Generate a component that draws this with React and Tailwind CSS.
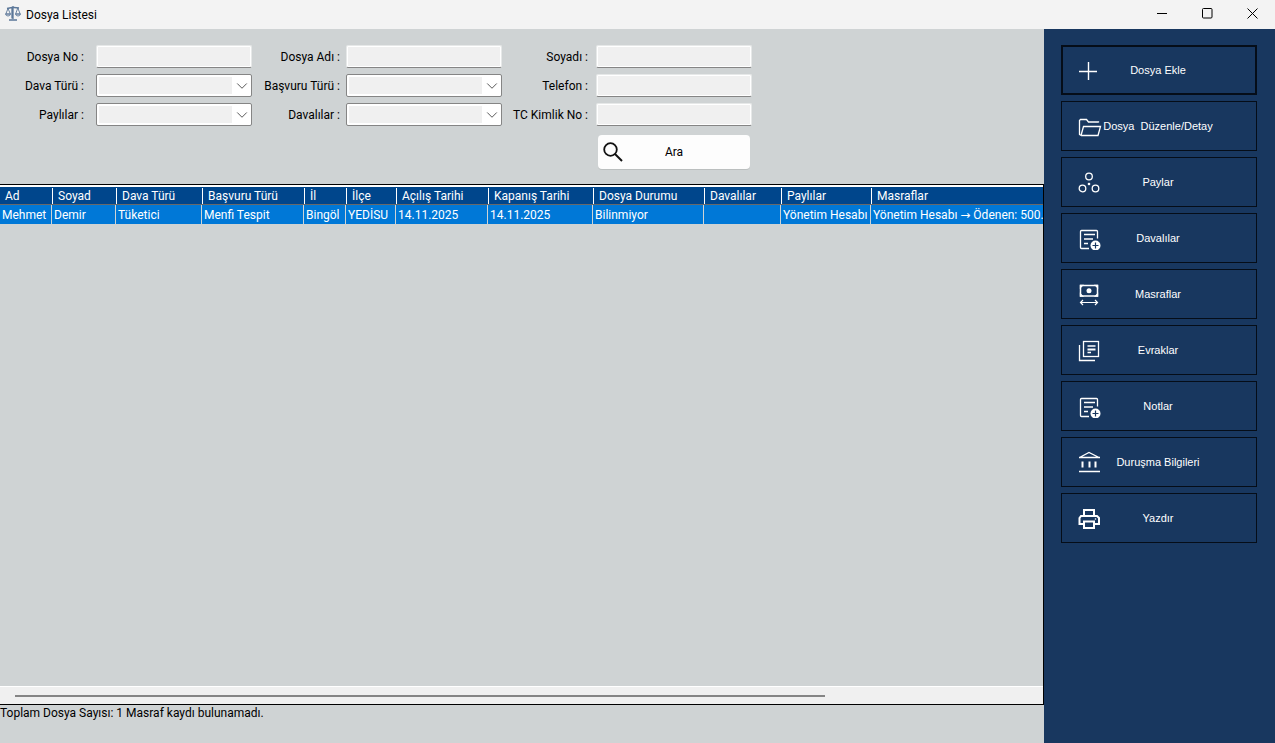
import React, { useState } from "react";
import { ChevronDown } from "lucide-react";

// Sidebar icons, all drawn on a 24x24 grid
const PlusIcon = () => (
  <path d="M1 13.5h18M10.5 4v18" strokeWidth="1.4" />
);

const FolderIcon = () => (
  <path d="M3 21.5 1.5 20.5V6.5L2.5 5.5h6l2 2.500h10v.5M3 21.500 5.500 12.500h17L20 21.500H3" strokeWidth="1.300" />
);

const SharesIcon = () => (
  <>
    <circle cx="11" cy="6.500" r="3.300" />
    <circle cx="4.500" cy="18.500" r="3.300" />
    <circle cx="17.500" cy="18.500" r="3.300" />
    <circle cx="11" cy="14" r="1.300" fill="currentColor" stroke="none" />
  </>
);

const NoteAddIcon = () => (
  <>
    <path d="M19.500 12.500V5.500Q19.500 4.500 18.500 4.500H3.500Q2.500 4.500 2.500 5.500V21.500Q2.500 22.500 3.500 22.500H11" />
    <path d="M6 8.500h11M6 13h9M6 17.500h4" />
    <circle cx="17.500" cy="19.500" r="5" fill="currentColor" stroke="none" />
    <path d="M17.500 16.500v6M14.500 19.500h6" stroke="#18375f" strokeWidth="1.200" />
  </>
);

const MoneyIcon = () => (
  <>
    <rect x="2.500" y="3.500" width="17" height="10.500" strokeWidth="1.500" />
    <path d="M2.500 3.500h2l-2 2zM19.500 3.500h-2l2 2zM2.500 14h2l-2-2zM19.500 14h-2l2-2z" fill="currentColor" />
    <circle cx="11" cy="8.700" r="2.500" fill="currentColor" stroke="none" />
    <path d="M2.500 20.500h17M5 18l-2.500 2.500L5 23M17 18l2.500 2.500L17 23" strokeWidth="1.200" />
  </>
);

const DocumentsIcon = () => (
  <>
    <rect x="5.500" y="3.500" width="15" height="15" />
    <path d="M1.500 7v15.500H17M9.500 8h8M9.500 14.500h3.500" />
    <path d="M9.500 11.500h8" strokeWidth="2" />
  </>
);

const CourtIcon = () => (
  <>
    <path d="M1 7.500h21M1.500 7.500 11 2.500l10 5M1 21.500h21" />
    <path d="M4.500 11.500v6M11.500 11.500v6M17.500 11.500v6" strokeWidth="2" />
  </>
);

const PrinterIcon = () => (
  <>
    <path d="M6 10V4h10v6M6 18H1.500v-6L3 10h16l2 2v6H16" strokeWidth="2" />
    <path d="M6 15.500h10V22H6z" strokeWidth="2" />
    <circle cx="17.500" cy="13" r="0.800" fill="currentColor" stroke="none" />
  </>
);

const ScalesIcon = () => (
  <svg viewBox="0 0 16 16" className="mb-1 h-4 w-4 text-[#5b7799]" fill="none" stroke="currentColor" aria-hidden="true">
    <path d="M8 1v13M7 2.500v11M4 15h8M2 3.500 7 2.500h2L14 3" strokeWidth="1.300" />
    <path d="M3 3.500.8 9h4.600zM12.800 3l-2.200 6h4.600z" strokeWidth="0.900" />
    <path d="M.500 9h5q-.5 2-2.500 2T.500 9zM10.500 9h5q-.5 2-2.500 2t-2.500-2z" strokeWidth="0.900" />
  </svg>
);

const menuItems = [
  { label: "Dosya Ekle", icon: PlusIcon },
  { label: "Dosya  Düzenle/Detay", icon: FolderIcon },
  { label: "Paylar", icon: SharesIcon },
  { label: "Davalılar", icon: NoteAddIcon },
  { label: "Masraflar", icon: MoneyIcon },
  { label: "Evraklar", icon: DocumentsIcon },
  { label: "Notlar", icon: NoteAddIcon },
  { label: "Duruşma Bilgileri", icon: CourtIcon },
  { label: "Yazdır", icon: PrinterIcon },
];

const columns = [
  { title: "Ad", width: "w-[52px]" },
  { title: "Soyad", width: "w-[64px]" },
  { title: "Dava Türü", width: "w-[86px]" },
  { title: "Başvuru Türü", width: "w-[102px]" },
  { title: "İl", width: "w-[42px]" },
  { title: "İlçe", width: "w-[50px]" },
  { title: "Açılış Tarihi", width: "w-[92px]" },
  { title: "Kapanış Tarihi", width: "w-[105px]" },
  { title: "Dosya Durumu", width: "w-[111px]" },
  { title: "Davalılar", width: "w-[77px]" },
  { title: "Paylılar", width: "w-[90px]" },
  { title: "Masraflar", width: "w-auto" },
];

const rows = [
  [
    "Mehmet",
    "Demir",
    "Tüketici",
    "Menfi Tespit",
    "Bingöl",
    "YEDİSU",
    "14.11.2025",
    "14.11.2025",
    "Bilinmiyor",
    "",
    "Yönetim Hesabı",
    "Yönetim Hesabı → Ödenen: 500.",
  ],
];

const TextField = ({ id, label }) => (
  <>
    <label htmlFor={id} className="text-right whitespace-nowrap">
      {label} :
    </label>
    <input
      id={id}
      type="text"
      className="h-[23px] w-full rounded-[2px] border border-[#e6e8e8] border-b-[#858585] bg-[#f0f0f0] px-1 shadow-[inset_0_0_0_1px_#fff] focus:outline-none"
    />
  </>
);

const SelectField = ({ id, label }) => (
  <>
    <label htmlFor={id} className="text-right whitespace-nowrap">
      {label} :
    </label>
    <div className="relative h-[23px] rounded-[2px] border border-[#858585] bg-white">
      <select
        id={id}
        className="block h-full w-full appearance-none bg-[#f0f0f0] bg-clip-content py-0.5 pr-[19px] pl-0.5 focus:outline-none"
      >
        <option value=""></option>
      </select>
      <ChevronDown
        className="pointer-events-none absolute top-0.5 right-0 h-[18px] w-[18px] text-[#555555]"
        strokeWidth={1.3}
      />
    </div>
  </>
);

const TitleBar = () => (
  <header className="flex h-[29px] items-center bg-[#f3f3f3] pl-[5px]">
    <ScalesIcon />
    <h1 className="flex-1 pl-[5px] text-[12px]">Dosya Listesi</h1>
    <button type="button" aria-label="Simge durumuna küçült" className="flex h-full w-[45px] items-center justify-center pb-0.5">
      <svg width="11" height="11" viewBox="0 0 11 11" stroke="#000" fill="none">
        <path d="M0 5.500h10" />
      </svg>
    </button>
    <button type="button" aria-label="Ekranı kapla" className="flex h-full w-[45px] items-center justify-center pb-0.5">
      <svg width="11" height="11" viewBox="0 0 11 11" stroke="#000" fill="none">
        <rect x="0.500" y="0.500" width="9.500" height="9.500" rx="1" />
      </svg>
    </button>
    <button type="button" aria-label="Kapat" className="flex h-full w-[45px] items-center justify-center pb-0.5">
      <svg width="11" height="11" viewBox="0 0 11 11" stroke="#000" fill="none">
        <path d="m.500.500 10 10m0-10-10 10" />
      </svg>
    </button>
  </header>
);

// Search criteria above the list
const FilterForm = () => (
  <form className="flex items-start pt-4 pb-[15px]" onSubmit={(e) => e.preventDefault()}>
    <div className="grid grid-cols-[84px_156px] items-center gap-x-3 gap-y-1.5">
      <TextField id="dosya-no" label="Dosya No" />
      <SelectField id="dava-turu" label="Dava Türü" />
      <SelectField id="paylilar" label="Paylılar" />
    </div>
    <div className="grid grid-cols-[88px_156px] items-center gap-x-1.5 gap-y-1.5">
      <TextField id="dosya-adi" label="Dosya Adı" />
      <SelectField id="basvuru-turu" label="Başvuru Türü" />
      <SelectField id="davalilar" label="Davalılar" />
    </div>
    <div className="grid grid-cols-[86px_156px] items-center gap-x-2 gap-y-1.5">
      <TextField id="soyadi" label="Soyadı" />
      <TextField id="telefon" label="Telefon" />
      <TextField id="tc-kimlik" label="TC Kimlik No" />
      <button
        type="submit"
        className="col-start-2 mx-0.5 mt-[3px] grid h-[34px] grid-cols-[20px_1fr_20px] items-center rounded-[4px] bg-[#fdfdfd] px-[5px] shadow-[0_1px_0_#bbbfbf]"
      >
        <svg viewBox="0 0 20 20" className="h-5 w-5" fill="none" stroke="#111" aria-hidden="true">
          <circle cx="7.500" cy="7.500" r="6.300" strokeWidth="1.800" />
          <path d="m12 12 7 7" strokeWidth="2" />
        </svg>
        <span>Ara</span>
      </button>
    </div>
  </form>
);

const CaseTable = () => (
  <div className="flex flex-1 flex-col border-t border-r border-b border-black">
    <div className="flex-1 overflow-hidden border-t-2 border-white">
      <table className="w-full table-fixed border-separate border-spacing-0 text-white">
        <thead>
          <tr className="bg-[#00468c]">
            {columns.map((col, i) => (
              <th
                key={col.title}
                className={`${col.width} h-[18px] border-b border-[#696969] p-0 text-left font-normal whitespace-nowrap`}
              >
                <span className={i === 0 ? "block pl-[5px] leading-4" : "block border-l border-white pl-[5px] leading-4"}>
                  {col.title}
                </span>
              </th>
            ))}
          </tr>
        </thead>
        <tbody>
          {rows.map((row, r) => (
            <tr key={r} className="bg-[#0078d7]">
              {row.map((cell, i) => (
                <td
                  key={i}
                  className="h-[19px] overflow-hidden border-r border-[#cfd3d4] p-0 pl-0.5 leading-[18px] whitespace-nowrap last:border-r-0"
                >
                  {cell}
                </td>
              ))}
            </tr>
          ))}
        </tbody>
      </table>
    </div>
    {/* Horizontal scrollbar */}
    <div className="flex h-[18px] items-center border-t border-white bg-[#f0f0f0] px-[15px]">
      <div className="h-0.5 w-4/5 bg-[#858585]" />
    </div>
  </div>
);

const Sidebar = () => {
  const [active, setActive] = useState("Dosya Ekle");

  return (
    <nav className="flex w-[231px] shrink-0 flex-col gap-1.5 bg-[#18375f] py-4 pr-[18px] pl-[17px]">
      {menuItems.map(({ label, icon: Icon }) => (
        <button
          key={label}
          type="button"
          onClick={() => setActive(label)}
          className={`grid h-[50px] grid-cols-[24px_1fr_26px] items-center border border-[#050d18] px-4 font-['Liberation_Sans',sans-serif] text-[11px] text-white ${
            active === label ? "shadow-[inset_0_0_0_1px_#050d18]" : ""
          }`}
        >
          <svg viewBox="0 0 24 24" className="h-6 w-6" fill="none" stroke="currentColor" strokeWidth="1.300" aria-hidden="true">
            <Icon />
          </svg>
          <span className="text-center whitespace-pre">{label}</span>
        </button>
      ))}
    </nav>
  );
};

const App = () => {
  return (
    <div className="flex min-h-screen flex-col bg-[#cfd3d4] font-['Roboto','DejaVu_Sans',sans-serif] text-[12px] leading-4 text-black">
      <TitleBar />
      <div className="flex flex-1">
        <main className="flex min-w-0 flex-1 flex-col">
          <FilterForm />
          <CaseTable />
          <footer className="h-[38px]">Toplam Dosya Sayısı: 1 Masraf kaydı bulunamadı.</footer>
        </main>
        <Sidebar />
      </div>
    </div>
  );
};

export default App;
